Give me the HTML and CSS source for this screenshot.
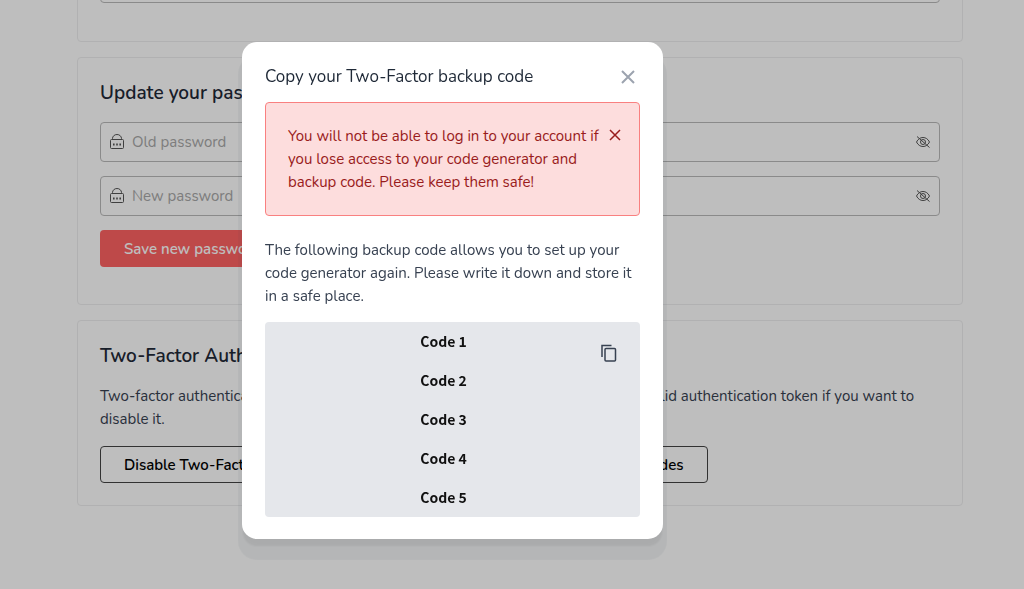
FILE: index.html
```html
<!DOCTYPE html>
<html lang="en">
<head>
    <meta charset="UTF-8">
    <meta name="viewport" content="width=device-width, initial-scale=1.0">
    <title>Account settings</title>
    <link rel="stylesheet" href="styles.css">
</head>
<body>
    <main class="settings">
        <section class="card card-first">
            <div class="field">
                <input type="text" aria-label="Account">
            </div>
        </section>

        <section class="card card-form">
            <h2>Update your password</h2>
            <form class="password-form">
                <div class="field">
                    <svg class="lock" viewBox="0 0 16 18" aria-hidden="true">
                        <path d="M3.5 6.500V5.5a4.5 4 0 0 1 9 0V6.500"/>
                        <rect x="1.5" y="6.500" width="13" height="9" rx="1"/>
                        <path class="dots" d="M4 11.5h1.6M7.2 11.5h1.6M10.4 11.5h1.6"/>
                    </svg>
                    <input type="password" placeholder="Old password" aria-label="Old password">
                    <button type="button" class="icon-button" aria-label="Show old password">
                        <svg class="eye" viewBox="0 0 16 16" aria-hidden="true">
                            <path d="M1.5 8C3 5 5.300 3.500 8 3.500S13 5 14.500 8C13 11 10.700 12.500 8 12.500S3 11 1.500 8z"/>
                            <circle cx="8" cy="8" r="2.500"/>
                            <path d="M2 2.500l12.500 11"/>
                        </svg>
                    </button>
                </div>
                <div class="field">
                    <svg class="lock" viewBox="0 0 16 18" aria-hidden="true">
                        <path d="M3.5 6.500V5.5a4.5 4 0 0 1 9 0V6.500"/>
                        <rect x="1.5" y="6.500" width="13" height="9" rx="1"/>
                        <path class="dots" d="M4 11.5h1.6M7.2 11.5h1.6M10.4 11.5h1.6"/>
                    </svg>
                    <input type="password" placeholder="New password" aria-label="New password">
                    <button type="button" class="icon-button" aria-label="Show new password">
                        <svg class="eye" viewBox="0 0 16 16" aria-hidden="true">
                            <path d="M1.5 8C3 5 5.300 3.500 8 3.500S13 5 14.500 8C13 11 10.700 12.500 8 12.500S3 11 1.500 8z"/>
                            <circle cx="8" cy="8" r="2.500"/>
                            <path d="M2 2.500l12.500 11"/>
                        </svg>
                    </button>
                </div>
                <button type="submit" class="button button-primary">Save new password</button>
            </form>
        </section>

        <section class="card">
            <h2>Two-Factor Authentication</h2>
            <p>Two-factor authentication is currently enabled on your account. You must enter a valid authentication token if you want to disable it.</p>
            <div class="actions">
                <button type="button" class="button button-outline">Disable Two-Factor Authentication</button>
                <button type="button" class="button button-outline">Regenerate Two-Factor backup codes</button>
            </div>
        </section>
    </main>

    <!-- backup code dialog -->
    <div class="overlay">
        <div class="modal" role="dialog" aria-modal="true" aria-labelledby="modal-title">
            <div class="modal-header">
                <h1 id="modal-title">Copy your Two-Factor backup code</h1>
                <button type="button" class="icon-button modal-close" aria-label="Close">
                    <svg viewBox="0 0 16 16" aria-hidden="true"><path d="M2 2l12 12M14 2L2 14"/></svg>
                </button>
            </div>
            <div class="alert" role="alert">
                <p>You will not be able to log in to your account if you lose access to your code generator and backup code. Please keep them safe!</p>
                <button type="button" class="icon-button alert-close" aria-label="Dismiss">
                    <svg viewBox="0 0 12 12" aria-hidden="true"><path d="M1 1l10 10M11 1L1 11"/></svg>
                </button>
            </div>
            <p>The following backup code allows you to set up your code generator again. Please write it down and store it in a safe place.</p>
            <div class="codes">
                <ul>
                    <li>Code 1</li>
                    <li>Code 2</li>
                    <li>Code 3</li>
                    <li>Code 4</li>
                    <li>Code 5</li>
                </ul>
                <button type="button" class="icon-button copy" aria-label="Copy codes">
                    <svg viewBox="0 0 18 18" aria-hidden="true">
                        <path d="M2 13V1.500h9.500"/>
                        <rect x="5" y="4.500" width="10.500" height="12.500" rx="1"/>
                    </svg>
                </button>
            </div>
        </div>
    </div>
</body>
</html>
```
FILE: styles.css
```css
* {
    box-sizing: border-box;
}

body {
    margin: 0;
    height: 100vh;
    overflow: hidden;
    background: white;
    color: #374151;
    font-family: Nunito, Lato, sans-serif;
    font-size: 15px;
    line-height: 23px;
}

h1, h2, p, ul {
    margin: 0;
    padding: 0;
}

button, input {
    color: inherit;
    font: inherit;
}

button {
    cursor: pointer;
}

svg {
    display: block;
    fill: none;
    stroke: currentColor;
}

.settings {
    display: flex;
    flex-direction: column;
    gap: 15px;
    padding: 0 61px 0 77px;
}

.card {
    display: flex;
    flex-direction: column;
    gap: 15px;
    padding: 22px;
    border: 1px solid #eeeeef;
    border-radius: 4px;
}

/* scrolled partly out of view */
.card-first {
    margin-top: -60px;
    padding-bottom: 38px;
}

.card-form {
    padding-bottom: 37px;
}

.card h2 {
    color: #1f2937;
    font-size: 19px;
    font-weight: 600;
    line-height: 27px;
}

.password-form {
    display: flex;
    flex-direction: column;
    align-items: flex-start;
    gap: 14px;
}

.field {
    display: flex;
    align-items: center;
    gap: 7px;
    width: 100%;
    height: 40px;
    padding: 0 8px;
    border: 1px solid #b9b9b9;
    border-radius: 4px;
}

.field input {
    flex: 1;
    min-width: 0;
    padding: 0;
    border: 0;
    outline: 0;
    background: transparent;
}

.field input::placeholder {
    color: #a8a8a8;
}

.lock {
    width: 16px;
    height: 18px;
    color: #555;
}

.lock .dots {
    stroke-width: 2;
}

.eye {
    width: 16px;
    height: 16px;
    color: #555;
}

.icon-button {
    flex: none;
    padding: 0;
    border: 0;
    background: none;
}

.button {
    height: 37px;
    padding: 0 23px;
    border: 1px solid transparent;
    border-radius: 4px;
    font-weight: 600;
    line-height: 20px;
}

.button-primary {
    background: #ff6363;
    color: white;
}

.button-outline {
    border-color: #444;
    background: white;
    color: black;
}

.actions {
    display: flex;
    gap: 15px;
}

.overlay {
    position: fixed;
    inset: 0;
    display: flex;
    align-items: flex-start;
    justify-content: center;
    padding: 42px 119px 0 0;
    background: rgba(0, 0, 0, 0.255);
}

.modal {
    display: flex;
    flex-direction: column;
    width: 100%;
    max-width: 421px;
    padding: 23px 23px 22px;
    border-radius: 15px;
    background: white;
    box-shadow: 0 8px 2px -1px rgba(0, 0, 0, 0.06), 0 17px 1px 4px rgba(31, 55, 71, 0.06);
}

.modal-header {
    display: flex;
    align-items: center;
    justify-content: space-between;
    margin-bottom: 14px;
}

.modal h1 {
    color: #1f2937;
    font-size: 17px;
    font-weight: 400;
    line-height: 23px;
}

.modal-close {
    margin-right: 4px;
    color: #9ca3af;
}

.modal-close svg {
    width: 16px;
    height: 16px;
    stroke-width: 2;
}

.alert {
    display: flex;
    align-items: flex-start;
    gap: 8px;
    margin-bottom: 23px;
    padding: 22px 18px 21px 22px;
    border: 1px solid #f98080;
    border-radius: 4px;
    background: #fddddd;
    color: #991b1b;
}

.alert p {
    flex: 1;
}

.alert-close {
    margin-top: 4px;
}

.alert-close svg {
    width: 12px;
    height: 12px;
    stroke-width: 1.5;
}

.codes {
    display: flex;
    align-items: flex-start;
    margin-top: 14px;
    border-radius: 4px;
    background: #e5e7eb;
}

.codes ul {
    display: flex;
    flex: 1;
    flex-direction: column;
    gap: 16px;
    padding: 8px 0 8px 22px;
    color: #111;
    font-family: "Noto Sans CJK JP", sans-serif;
    font-size: 14px;
    font-weight: 700;
    list-style: none;
    text-align: center;
}

.copy {
    margin: 22px 22px 0 0;
    color: #374151;
}

.copy svg {
    width: 18px;
    height: 18px;
    stroke-width: 1.5;
}
```
